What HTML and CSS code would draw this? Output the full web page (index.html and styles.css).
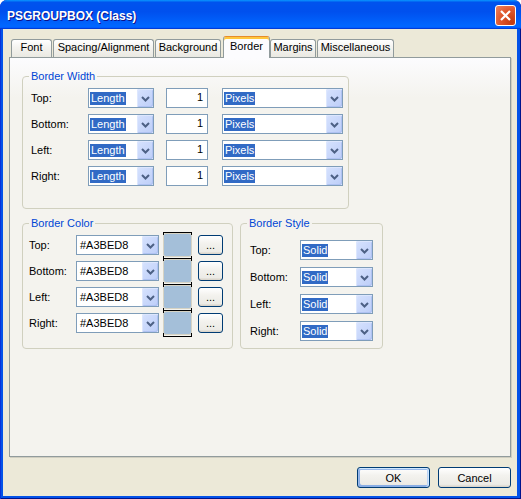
FILE: index.html
```html
<!DOCTYPE html>
<html>
<head>
<meta charset="utf-8">
<title>PSGROUPBOX (Class)</title>
<link rel="stylesheet" href="styles.css">
</head>
<body>
<div class="window">
  <div class="titlebar">
    <span class="title">PSGROUPBOX (Class)</span>
    <button class="close" aria-label="Close">
      <svg width="13" height="13" viewBox="0 0 13 13"><path d="M2 2 L11 11 M11 2 L2 11" stroke="#fff" stroke-width="2.2" fill="none"/></svg>
    </button>
  </div>
  <div class="client">
    <div class="tabs">
      <div class="tab t-font">Font</div>
      <div class="tab t-spacing">Spacing/Alignment</div>
      <div class="tab t-bg">Background</div>
      <div class="tab active t-border">Border</div>
      <div class="tab t-margins">Margins</div>
      <div class="tab t-misc">Miscellaneous</div>
    </div>
    <div class="panel">
      <fieldset class="group g-width">
        <legend>Border Width</legend>
        <div class="gbody">
          <div class="row">
            <span class="lbl">Top:</span>
            <div class="combo c-len"><span class="val"><span class="sel">Length</span></span><span class="drop"><svg width="9" height="6" viewBox="0 0 9 6"><path d="M1 1 L4.5 4.5 L8 1" stroke="#4D6185" stroke-width="2" fill="none"/></svg></span></div>
            <div class="textbox">1</div>
            <div class="combo c-unit"><span class="val"><span class="sel">Pixels</span></span><span class="drop"><svg width="9" height="6" viewBox="0 0 9 6"><path d="M1 1 L4.5 4.5 L8 1" stroke="#4D6185" stroke-width="2" fill="none"/></svg></span></div>
          </div>
          <div class="row">
            <span class="lbl">Bottom:</span>
            <div class="combo c-len"><span class="val"><span class="sel">Length</span></span><span class="drop"><svg width="9" height="6" viewBox="0 0 9 6"><path d="M1 1 L4.5 4.5 L8 1" stroke="#4D6185" stroke-width="2" fill="none"/></svg></span></div>
            <div class="textbox">1</div>
            <div class="combo c-unit"><span class="val"><span class="sel">Pixels</span></span><span class="drop"><svg width="9" height="6" viewBox="0 0 9 6"><path d="M1 1 L4.5 4.5 L8 1" stroke="#4D6185" stroke-width="2" fill="none"/></svg></span></div>
          </div>
          <div class="row">
            <span class="lbl">Left:</span>
            <div class="combo c-len"><span class="val"><span class="sel">Length</span></span><span class="drop"><svg width="9" height="6" viewBox="0 0 9 6"><path d="M1 1 L4.5 4.5 L8 1" stroke="#4D6185" stroke-width="2" fill="none"/></svg></span></div>
            <div class="textbox">1</div>
            <div class="combo c-unit"><span class="val"><span class="sel">Pixels</span></span><span class="drop"><svg width="9" height="6" viewBox="0 0 9 6"><path d="M1 1 L4.5 4.5 L8 1" stroke="#4D6185" stroke-width="2" fill="none"/></svg></span></div>
          </div>
          <div class="row">
            <span class="lbl">Right:</span>
            <div class="combo c-len"><span class="val"><span class="sel">Length</span></span><span class="drop"><svg width="9" height="6" viewBox="0 0 9 6"><path d="M1 1 L4.5 4.5 L8 1" stroke="#4D6185" stroke-width="2" fill="none"/></svg></span></div>
            <div class="textbox">1</div>
            <div class="combo c-unit"><span class="val"><span class="sel">Pixels</span></span><span class="drop"><svg width="9" height="6" viewBox="0 0 9 6"><path d="M1 1 L4.5 4.5 L8 1" stroke="#4D6185" stroke-width="2" fill="none"/></svg></span></div>
          </div>
        </div>
      </fieldset>

      <div class="lower">
        <fieldset class="group g-color">
          <legend>Border Color</legend>
          <div class="gbody">
            <div class="row">
              <span class="lbl">Top:</span>
              <div class="combo c-color"><span class="val"><span class="plain">#A3BED8</span></span><span class="drop"><svg width="9" height="6" viewBox="0 0 9 6"><path d="M1 1 L4.5 4.5 L8 1" stroke="#4D6185" stroke-width="2" fill="none"/></svg></span></div>
              <div class="swatch"><div class="fill"></div></div>
              <button class="btn dots">...</button>
            </div>
            <div class="row">
              <span class="lbl">Bottom:</span>
              <div class="combo c-color"><span class="val"><span class="plain">#A3BED8</span></span><span class="drop"><svg width="9" height="6" viewBox="0 0 9 6"><path d="M1 1 L4.5 4.5 L8 1" stroke="#4D6185" stroke-width="2" fill="none"/></svg></span></div>
              <div class="swatch"><div class="fill"></div></div>
              <button class="btn dots">...</button>
            </div>
            <div class="row">
              <span class="lbl">Left:</span>
              <div class="combo c-color"><span class="val"><span class="plain">#A3BED8</span></span><span class="drop"><svg width="9" height="6" viewBox="0 0 9 6"><path d="M1 1 L4.5 4.5 L8 1" stroke="#4D6185" stroke-width="2" fill="none"/></svg></span></div>
              <div class="swatch"><div class="fill"></div></div>
              <button class="btn dots">...</button>
            </div>
            <div class="row">
              <span class="lbl">Right:</span>
              <div class="combo c-color"><span class="val"><span class="plain">#A3BED8</span></span><span class="drop"><svg width="9" height="6" viewBox="0 0 9 6"><path d="M1 1 L4.5 4.5 L8 1" stroke="#4D6185" stroke-width="2" fill="none"/></svg></span></div>
              <div class="swatch"><div class="fill"></div></div>
              <button class="btn dots">...</button>
            </div>
          </div>
        </fieldset>

        <fieldset class="group g-style">
          <legend>Border Style</legend>
          <div class="gbody">
            <div class="row">
              <span class="lbl">Top:</span>
              <div class="combo c-style"><span class="val"><span class="sel">Solid</span></span><span class="drop"><svg width="9" height="6" viewBox="0 0 9 6"><path d="M1 1 L4.5 4.5 L8 1" stroke="#4D6185" stroke-width="2" fill="none"/></svg></span></div>
            </div>
            <div class="row">
              <span class="lbl">Bottom:</span>
              <div class="combo c-style"><span class="val"><span class="sel">Solid</span></span><span class="drop"><svg width="9" height="6" viewBox="0 0 9 6"><path d="M1 1 L4.5 4.5 L8 1" stroke="#4D6185" stroke-width="2" fill="none"/></svg></span></div>
            </div>
            <div class="row">
              <span class="lbl">Left:</span>
              <div class="combo c-style"><span class="val"><span class="sel">Solid</span></span><span class="drop"><svg width="9" height="6" viewBox="0 0 9 6"><path d="M1 1 L4.5 4.5 L8 1" stroke="#4D6185" stroke-width="2" fill="none"/></svg></span></div>
            </div>
            <div class="row">
              <span class="lbl">Right:</span>
              <div class="combo c-style"><span class="val"><span class="sel">Solid</span></span><span class="drop"><svg width="9" height="6" viewBox="0 0 9 6"><path d="M1 1 L4.5 4.5 L8 1" stroke="#4D6185" stroke-width="2" fill="none"/></svg></span></div>
            </div>
          </div>
        </fieldset>
      </div>
    </div>
    <div class="buttons">
      <button class="btn action default">OK</button>
      <button class="btn action">Cancel</button>
    </div>
  </div>
</div>
</body>
</html>
```

FILE: styles.css
```css
* { box-sizing: border-box; }

body {
  margin: 0;
  font-family: "Liberation Sans", Arial, sans-serif;
  font-size: 11px;
  color: #000;
  background: #fff;
}

.window {
  width: 521px;
  height: 499px;
  display: flex;
  flex-direction: column;
  background: #0352E8;
  border-radius: 7px 7px 0 0;
  box-shadow: inset 1px 0 #0831D9, inset -1px -1px #00138C;
  overflow: hidden;
}

.titlebar {
  flex: none;
  height: 29px;
  display: flex;
  justify-content: space-between;
  align-items: flex-start;
  padding: 5px 5px 0 7px;
  border-radius: 7px 7px 0 0;
  background: linear-gradient(180deg, #0997FF, #0053EE 8%, #0050EE 40%, #0066FF 88%, #0066FF 93%, #005BFF 95%, #003DD7 96%, #003DD7);
}

.title {
  color: #fff;
  font-weight: bold;
  font-size: 12px;
  line-height: 20px;
  margin-top: 1px;
  text-shadow: 1px 1px #0F1089;
}

.close {
  width: 21px;
  height: 21px;
  padding: 0;
  border: 1px solid #fff;
  border-radius: 3px;
  background: radial-gradient(circle at 85% 85%, #C33A0E, #E0582E 55%, #EE8562);
  display: flex;
  align-items: center;
  justify-content: center;
}

.client {
  flex: 1;
  margin: 0 4px 3px 3px;
  background: #ECE9D8;
  display: flex;
  flex-direction: column;
  padding: 7px 6px 0 6px;
}

/* Tabs */
.tabs {
  display: flex;
  gap: 1px;
  padding-left: 2px;
  height: 22px;
  margin-bottom: -1px;
  position: relative;
  z-index: 1;
  align-items: flex-start;
}

.tab {
  height: 18px;
  margin-top: 3px;
  border: 1px solid #919B9C;
  border-bottom: none;
  border-radius: 3px 3px 0 0;
  background: linear-gradient(#FFFFFF, #F4F3EF 45%, #EAE9E2);
  line-height: 15px;
  text-align: center;
  white-space: nowrap;
}

.tab.active {
  height: 22px;
  margin-top: 0;
  margin-left: 1px;
  margin-right: -1px;
  border-top: 1px solid #E68B2C;
  box-shadow: inset 0 2px #FFC73C;
  background: #FCFCFE;
  padding-top: 2px;
  line-height: 14px;
}

.t-font { width: 41px; }
.t-spacing { width: 101px; }
.t-bg { width: 66px; }
.t-border { width: 47px; }
.t-margins { width: 46px; }
.t-misc { width: 77px; }

.panel {
  height: 400px;
  border: 1px solid #919B9C;
  background: linear-gradient(#FCFCFE, #F4F3EE 40px);
  padding: 12px 0 0 12px;
  box-shadow: 1px 1px 0 #D0CEC0;
}

/* Group boxes */
.group {
  margin: 0;
  padding: 0;
  border: 1px solid #D0D0BF;
  border-radius: 4px;
  min-width: 0;
}

.group legend {
  color: #0046D5;
  margin-left: 6px;
  padding: 0 2px;
  line-height: 13px;
  font-size: 11px;
}

.gbody {
  display: flex;
  flex-direction: column;
  gap: 6px;
}

.row {
  display: flex;
  align-items: center;
  height: 20px;
}

.g-width { width: 327px; }
.g-width .gbody { padding: 5px 0 22px 8px; }
.g-width .lbl { width: 57px; }

.lower {
  display: flex;
  gap: 7px;
  margin-top: 8px;
  align-items: flex-start;
}

.g-color { width: 211px; }
.g-color .gbody { padding: 5px 0 15px 6px; }
.g-color .lbl { width: 47px; }

.g-style { width: 143px; }
.g-style .gbody { padding: 10px 0 7px 9px; gap: 7px; }
.g-style .lbl { width: 50px; }

/* Combo boxes */
.combo {
  display: flex;
  align-items: center;
  height: 20px;
  border: 1px solid #7F9DB9;
  background: #fff;
  padding-left: 1px;
  flex: none;
}

.combo .val {
  flex: 1;
  display: flex;
  align-items: center;
}

.sel, .plain {
  display: inline-block;
  padding: 0 1px;
  line-height: 13px;
}

.sel {
  background: #316AC5;
  color: #fff;
}

.plain { padding-left: 2px; }

.drop {
  width: 16px;
  height: 18px;
  flex: none;
  border-radius: 2px;
  background: linear-gradient(135deg, #D6E2FE, #BDCEF8);
  box-shadow: inset 1px 1px #DDE7FE, inset -1px -1px #AFC2F3;
  display: flex;
  align-items: center;
  justify-content: center;
  padding-top: 1px;
}

.c-len { width: 66px; margin-right: 12px; }
.c-unit { width: 121px; }
.c-color { width: 83px; }
.c-style { width: 73px; }

.textbox {
  width: 42px;
  height: 20px;
  margin-right: 14px;
  border: 1px solid #7F9DB9;
  background: #fff;
  text-align: right;
  padding-right: 4px;
  line-height: 17px;
  flex: none;
}

/* Color swatches */
.swatch {
  position: relative;
  flex: none;
  width: 29px;
  height: 26px;
  margin-left: 4px;
  padding-top: 1px;
}

.swatch::before {
  content: "";
  position: absolute;
  left: 0;
  right: 0;
  top: -2px;
  height: 5px;
  border-left: 1px solid #000;
  border-right: 1px solid #000;
  background: linear-gradient(#000, #000) 0 2px / 100% 1px no-repeat;
}

.row:first-child .swatch::before {
  top: 0;
  height: 3px;
  background-position: 0 0;
}

.row:last-child .swatch::after {
  content: "";
  position: absolute;
  left: 0;
  right: 0;
  bottom: -1px;
  height: 4px;
  border-left: 1px solid #000;
  border-right: 1px solid #000;
  background: linear-gradient(#000, #000) 0 100% / 100% 1px no-repeat;
}

.fill {
  height: 24px;
  background: #A4BFD9;
  border: 1px solid #D6D3C4;
  border-radius: 3px;
}

/* Buttons */
.btn {
  font-family: "Liberation Sans", Arial, sans-serif;
  font-size: 11px;
  color: #000;
  border: 1px solid #003C74;
  border-radius: 3px;
  background: linear-gradient(180deg, #FFFFFF, #F3F2EE 40%, #ECEBE6 86%, #D6D0C5);
  padding: 0;
  flex: none;
}

.dots {
  width: 25px;
  height: 20px;
  margin-left: 6px;
  line-height: 16px;
}

.buttons {
  display: flex;
  justify-content: flex-end;
  gap: 8px;
  margin-top: 10px;
}

.action {
  width: 73px;
  height: 21px;
}

.default {
  box-shadow: inset -1px 1px #CEE7FF, inset 1px 2px #98B8EA, inset -2px 0 #BCD4F6, inset 1px -1px #89ADE4, inset 2px -2px #89ADE4;
}
```
